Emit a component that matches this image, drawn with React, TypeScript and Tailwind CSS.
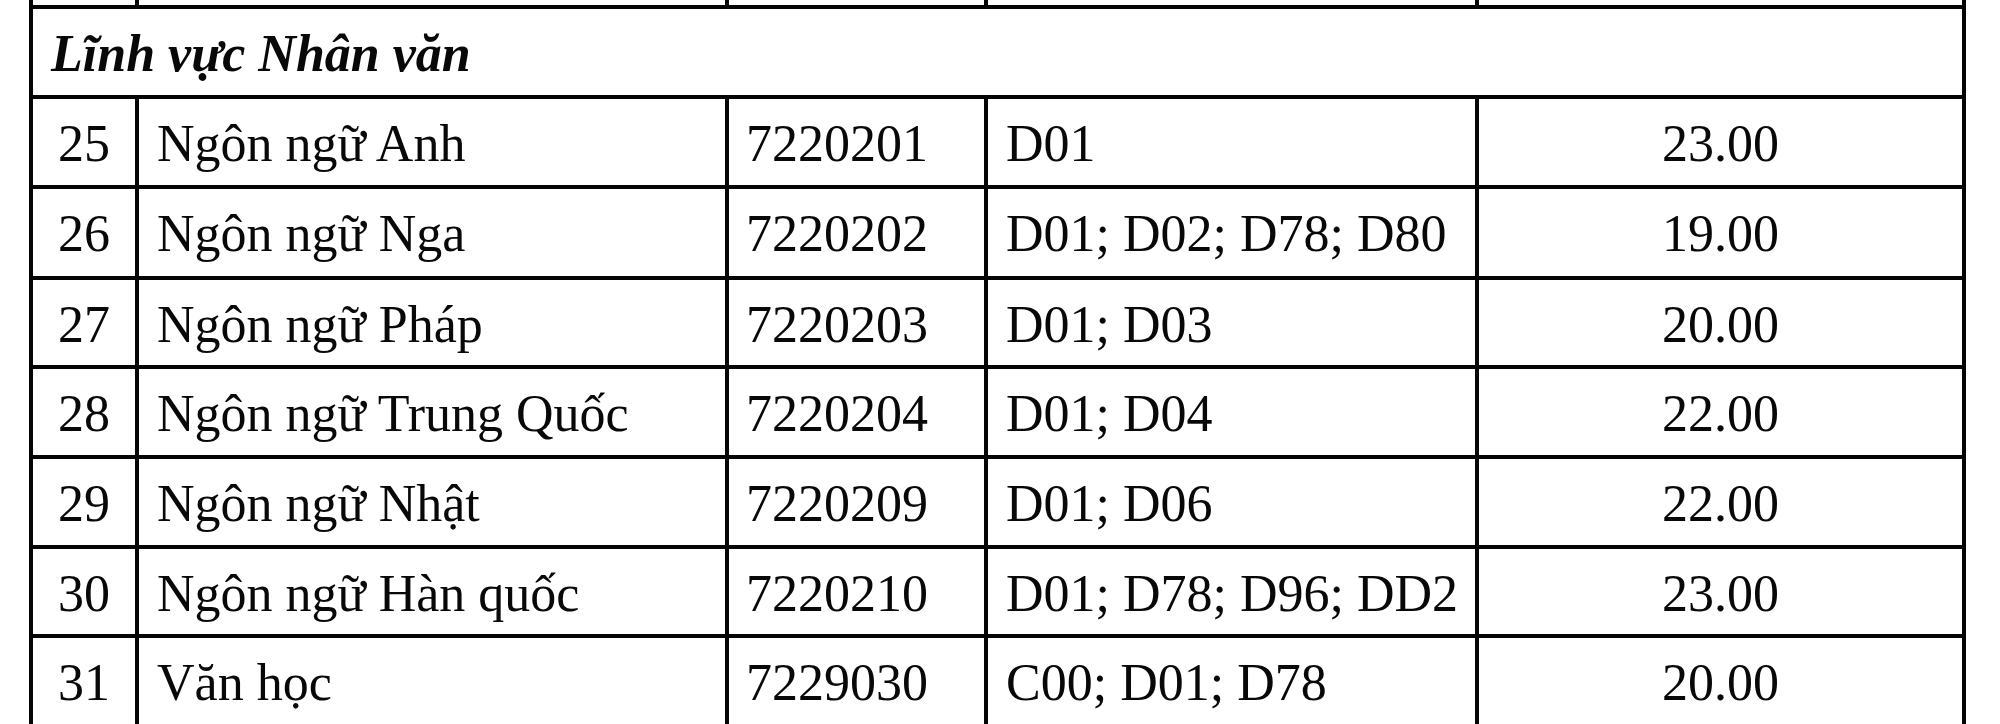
import React from "react";

const rows: [string, string, string, string, string, number][] = [
  ["25", "Ngôn ngữ Anh", "7220201", "D01", "23.00", 90],
  ["26", "Ngôn ngữ Nga", "7220202", "D01; D02; D78; D80", "19.00", 91],
  ["27", "Ngôn ngữ Pháp", "7220203", "D01; D03", "20.00", 89],
  ["28", "Ngôn ngữ Trung Quốc", "7220204", "D01; D04", "22.00", 90],
  ["29", "Ngôn ngữ Nhật", "7220209", "D01; D06", "22.00", 90],
  ["30", "Ngôn ngữ Hàn quốc", "7220210", "D01; D78; D96; DD2", "23.00", 89],
  ["31", "Văn học", "7229030", "C00; D01; D78", "20.00", 92],
];

const gridCols = "grid grid-cols-[106px_590px_259px_491px_483px]";
const cell = "border-r-[4px] border-[#050505] pt-[17px] leading-[56px] whitespace-nowrap";

export default function App() {
  return (
    <div className="w-[2000px] h-[724px] overflow-hidden bg-white text-[#080808] font-['Liberation_Serif','Times_New_Roman',serif] text-[52px]">
      <div className="ml-[29px] w-[1937px] border-x-[4px] border-[#050505]">
        {/* stub of previous row */}
        <div className={`${gridCols} h-[5px]`}>
          <div className="border-r-[4px] border-[#050505]" />
          <div className="border-r-[4px] border-[#050505]" />
          <div className="border-r-[4px] border-[#050505]" />
          <div className="border-r-[4px] border-[#050505]" />
          <div />
        </div>
        {/* section header */}
        <div className="h-[90px] border-t-[4px] border-[#050505] pl-[18px] pt-[17px] leading-[56px] font-bold italic">
          Lĩnh vực Nhân văn
        </div>
        {rows.map(([no, name, code, combo, score, h]) => (
          <div
            key={no}
            className={`${gridCols} border-t-[4px] border-[#050505]`}
            style={{ height: h }}
          >
            <div className={`${cell} text-center`}>{no}</div>
            <div className={`${cell} pl-[18px]`}>{name}</div>
            <div className={`${cell} pl-[17px]`}>{code}</div>
            <div className={`${cell} pl-[18px]`}>{combo}</div>
            <div className="pt-[17px] leading-[56px] text-center">{score}</div>
          </div>
        ))}
      </div>
    </div>
  );
}
